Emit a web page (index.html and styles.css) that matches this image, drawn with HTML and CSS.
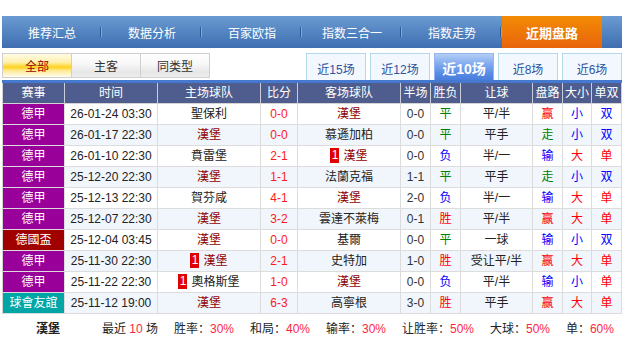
FILE: index.html
```html
<!DOCTYPE html>
<html lang="zh">
<head>
<meta charset="utf-8">
<title>近期盘路</title>
<link rel="stylesheet" href="styles.css">
</head>
<body>
<div class="page">
  <div class="nav">
    <div class="nav-item sep">推荐汇总</div>
    <div class="nav-item sep">数据分析</div>
    <div class="nav-item sep">百家欧指</div>
    <div class="nav-item sep">指数三合一</div>
    <div class="nav-item sep">指数走势</div>
    <div class="nav-item active">近期盘路</div>
  </div>

  <div class="filters">
    <div class="btn-group">
      <div class="btn on">全部</div>
      <div class="btn">主客</div>
      <div class="btn">同类型</div>
    </div>
    <div class="tabs">
      <div class="tab">近15场</div>
      <div class="tab">近12场</div>
      <div class="tab on">近10场</div>
      <div class="tab">近8场</div>
      <div class="tab">近6场</div>
    </div>
  </div>
  <div class="bar"></div>

  <table class="grid">
    <colgroup>
      <col class="c1"><col class="c2"><col class="c3"><col class="c4"><col class="c5"><col class="c6"><col class="c7"><col class="c8"><col class="c9"><col class="c10"><col class="c11">
    </colgroup>
    <thead>
      <tr><th>赛事</th><th>时间</th><th>主场球队</th><th>比分</th><th>客场球队</th><th>半场</th><th>胜负</th><th>让球</th><th>盘路</th><th>大小</th><th>单双</th></tr>
    </thead>
    <tbody>
      <tr><td class="lg lg-bund">德甲</td><td class="tm">26-01-24 03:30</td><td>聖保利</td><td class="sc">0-0</td><td class="hl">漢堡</td><td class="ht">0-0</td><td class="g">平</td><td>平/半</td><td class="r">赢</td><td class="b">小</td><td class="b">双</td></tr>
      <tr><td class="lg lg-bund">德甲</td><td class="tm">26-01-17 22:30</td><td class="hl">漢堡</td><td class="sc">0-0</td><td>慕遜加柏</td><td class="ht">0-0</td><td class="g">平</td><td>平手</td><td class="g">走</td><td class="b">小</td><td class="b">双</td></tr>
      <tr><td class="lg lg-bund">德甲</td><td class="tm">26-01-10 22:30</td><td>賁雷堡</td><td class="sc">2-1</td><td class="hl"><span class="rc">1</span>漢堡</td><td class="ht">0-0</td><td class="b">负</td><td>半/一</td><td class="b">输</td><td class="r">大</td><td class="r">单</td></tr>
      <tr><td class="lg lg-bund">德甲</td><td class="tm">25-12-20 22:30</td><td class="hl">漢堡</td><td class="sc">1-1</td><td>法蘭克福</td><td class="ht">1-1</td><td class="g">平</td><td>平手</td><td class="g">走</td><td class="b">小</td><td class="b">双</td></tr>
      <tr><td class="lg lg-bund">德甲</td><td class="tm">25-12-13 22:30</td><td>賀芬咸</td><td class="sc">4-1</td><td class="hl">漢堡</td><td class="ht">2-0</td><td class="b">负</td><td>半/一</td><td class="b">输</td><td class="r">大</td><td class="r">单</td></tr>
      <tr><td class="lg lg-bund">德甲</td><td class="tm">25-12-07 22:30</td><td class="hl">漢堡</td><td class="sc">3-2</td><td>雲達不萊梅</td><td class="ht">0-1</td><td class="r">胜</td><td>平/半</td><td class="r">赢</td><td class="r">大</td><td class="r">单</td></tr>
      <tr><td class="lg lg-cup">德國盃</td><td class="tm">25-12-04 03:45</td><td class="hl">漢堡</td><td class="sc">0-0</td><td>基爾</td><td class="ht">0-0</td><td class="g">平</td><td>一球</td><td class="b">输</td><td class="b">小</td><td class="b">双</td></tr>
      <tr><td class="lg lg-bund">德甲</td><td class="tm">25-11-30 22:30</td><td class="hl"><span class="rc">1</span>漢堡</td><td class="sc">2-1</td><td>史特加</td><td class="ht">1-0</td><td class="r">胜</td><td>受让平/半</td><td class="r">赢</td><td class="r">大</td><td class="r">单</td></tr>
      <tr><td class="lg lg-bund">德甲</td><td class="tm">25-11-22 22:30</td><td><span class="rc">1</span>奧格斯堡</td><td class="sc">1-0</td><td class="hl">漢堡</td><td class="ht">0-0</td><td class="b">负</td><td>平/半</td><td class="b">输</td><td class="b">小</td><td class="r">单</td></tr>
      <tr><td class="lg lg-friendly">球會友誼</td><td class="tm">25-11-12 19:00</td><td class="hl">漢堡</td><td class="sc">6-3</td><td>高寧根</td><td class="ht">3-0</td><td class="r">胜</td><td>平手</td><td class="r">赢</td><td class="r">大</td><td class="r">单</td></tr>
    </tbody>
  </table>

  <div class="footer">
    <div class="ft-name">漢堡</div>
    <div class="ft-stats">
      <span>最近 <em>10</em> 场</span>
      <span>胜率：<em>30%</em></span>
      <span>和局：<em>40%</em></span>
      <span>输率：<em>30%</em></span>
      <span>让胜率：<em>50%</em></span>
      <span>大球：<em>50%</em></span>
      <span>单：<em>60%</em></span>
    </div>
  </div>
</div>
</body>
</html>
```

FILE: styles.css
```css
* { box-sizing: border-box; }
body {
  margin: 0;
  background: #fff;
  font-family: "Liberation Sans", "Noto Sans CJK SC", sans-serif;
  font-size: 12px;
  color: #222;
}
.page {
  width: 620px;
  margin: 16px 0 0 2px;
}

/* top nav */
.nav {
  display: flex;
  height: 32px;
  background: linear-gradient(#6a9bd1, #3e6eb1);
}
.nav-item {
  position: relative;
  width: 100px;
  display: flex;
  align-items: center;
  justify-content: center;
  color: #fff;
  font-size: 12px;
}
.nav-item.sep::after {
  content: "";
  position: absolute;
  right: 1px;
  top: 11px;
  width: 1px;
  height: 10px;
  background: #2c5894;
  box-shadow: 1px 0 0 #84a9d8;
}
.nav-item.active {
  background: linear-gradient(#f38b04, #e8640c);
  font-weight: bold;
  font-size: 13px;
}

/* filters */
.filters {
  display: flex;
  justify-content: space-between;
  align-items: flex-start;
  margin-top: 5px;
  height: 27px;
}
.btn-group {
  display: flex;
}
.btn {
  width: 70px;
  height: 25px;
  border: 1px solid #cfcfcf;
  margin-left: -1px;
  display: flex;
  align-items: center;
  justify-content: center;
  color: #333;
  background: linear-gradient(#ffffff 0%, #f7f7f7 45%, #e6e6e6 80%, #eeeeee 100%);
}
.btn:first-child { margin-left: 0; }
.btn.on {
  color: #990000;
  background: linear-gradient(#fffbe4 0%, #fff1b0 35%, #ffd21e 58%, #ffe88a 70%, #fffdf2 100%);
}
.tabs {
  display: flex;
  gap: 4px;
}
.tab {
  width: 60px;
  height: 27px;
  border: 1px solid #b2d9ee;
  border-bottom: none;
  background: #f3f8fe;
  color: #2f52a0;
  display: flex;
  align-items: center;
  justify-content: center;
  padding-top: 2px;
}
.tab.on {
  border-color: #93b6ec;
  background: linear-gradient(#b3cdf6 0%, #7aa5ee 45%, #5588e4 80%, #4a7edc 100%);
  color: #fff;
  font-weight: bold;
  font-size: 14px;
}
.bar {
  height: 3px;
  background: #4479cf;
}

/* table */
.grid {
  width: 620px;
  table-layout: fixed;
  border-collapse: separate;
  border-spacing: 0;
  border-left: 1px solid #d4d4d4;
}
.c1 { width: 62px; }
.c2 { width: 93px; }
.c3 { width: 103px; }
.c4 { width: 37px; }
.c5 { width: 103px; }
.c6 { width: 30px; }
.c7 { width: 30px; }
.c8 { width: 72px; }
.c9 { width: 30px; }
.c10 { width: 29px; }
.c11 { width: 30px; }
.grid th,
.grid td {
  height: 21px;
  padding: 0;
  text-align: center;
  vertical-align: middle;
  white-space: nowrap;
  overflow: hidden;
  border-right: 1px solid #dcdcdc;
  border-bottom: 1px solid #dcdcdc;
  font-weight: normal;
  line-height: 20px;
}
.grid th {
  background: #4e5d8d;
  color: #fff;
  border-right-color: #c9cedb;
  border-bottom-color: #d4d4d4;
}
.grid tbody tr:nth-child(even) td { background: #f1f6fd; }
.grid td.lg { color: #fff; }
.grid tbody tr td.lg-bund { background: #990099; }
.grid tbody tr td.lg-cup { background: #a00000; }
.grid tbody tr td.lg-friendly { background: #00a5a5; }
.tm { color: #222; }
.sc { color: #ff1a1a; }
.ht { color: #333; }
.hl { color: #8f0000; }
.r { color: #ff0000; }
.g { color: #008000; }
.b { color: #0000ff; }
.rc {
  display: inline-block;
  width: 9px;
  height: 15px;
  line-height: 15px;
  margin-right: 4px;
  background: #e00000;
  color: #fff;
  font-size: 12px;
  vertical-align: top;
  margin-top: 2px;
}

/* footer */
.footer {
  display: flex;
  align-items: center;
  height: 26px;
}
.ft-name {
  margin-left: 34px;
  font-weight: bold;
  color: #222;
}
.ft-stats {
  margin-left: 42px;
  width: 512px;
  display: flex;
  justify-content: space-between;
  color: #222;
}
.ft-stats em {
  font-style: normal;
  color: #ff1f3f;
}
```
